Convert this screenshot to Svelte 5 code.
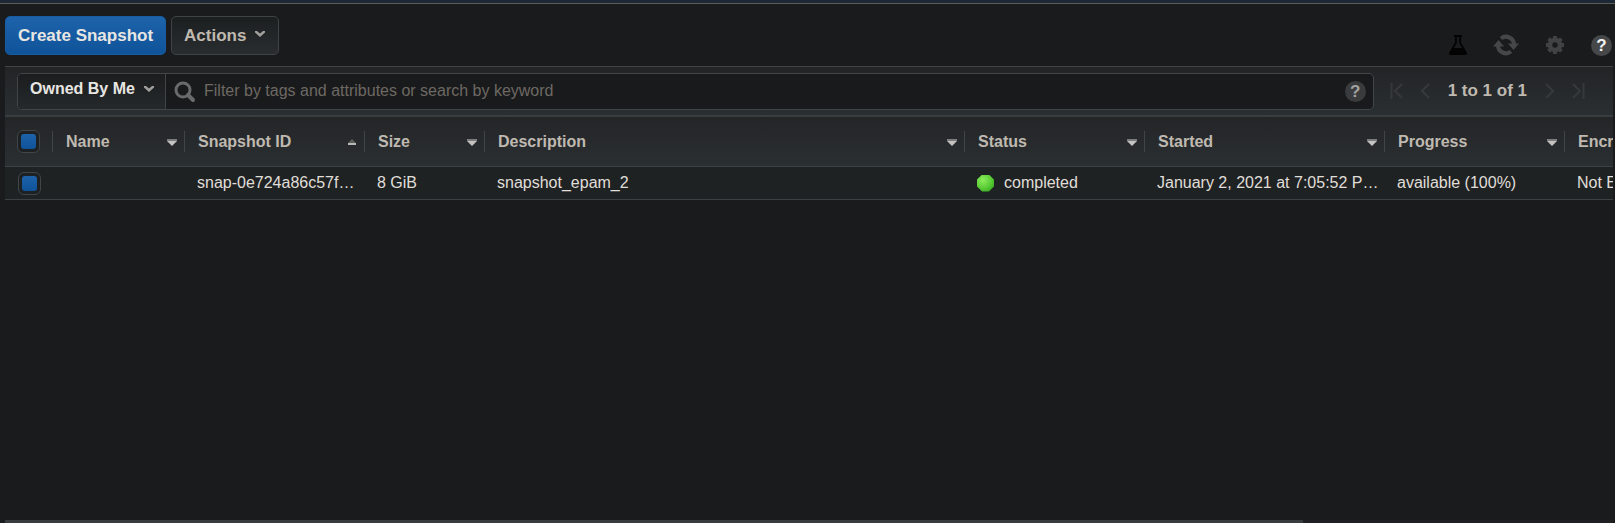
<script>
  const columns = [
    { label: 'Name', size: 'name', sort: 'down' },
    { label: 'Snapshot ID', size: 'medium', sort: 'up' },
    { label: 'Size', size: 'small', sort: 'down' },
    { label: 'Description', size: 'wide', sort: 'down' },
    { label: 'Status', size: 'medium', sort: 'down' },
    { label: 'Started', size: 'large', sort: 'down' },
    { label: 'Progress', size: 'medium', sort: 'down' },
    { label: 'Encryption', size: 'medium', sort: 'down' }
  ];
  const rows = [
    {
      name: '',
      id: 'snap-0e724a86c57f0b3d2',
      size: '8 GiB',
      description: 'snapshot_epam_2',
      status: 'completed',
      started: 'January 2, 2021 at 7:05:52 PM UTC+2',
      progress: 'available (100%)',
      encryption: 'Not Encrypted'
    }
  ];
</script>

{#snippet chevron()}
  <svg class="chevron" width="12" height="8" viewBox="0 0 12 8" aria-hidden="true">
    <path d="M1 1h2l3 2.600L9 1h2v1.400L6 7 1 2.400z" />
  </svg>
{/snippet}

<div class="page">
  <div class="strip"></div>

  <header class="toolbar">
    <div class="actions">
      <button class="btn primary">Create Snapshot</button>
      <button class="btn">Actions {@render chevron()}</button>
    </div>
    <div class="tools">
      <button class="icon" aria-label="Experiments">
        <svg width="18" height="20" viewBox="0 0 18 20">
          <path fill="#030303" fill-rule="evenodd" d="M5 0h8v2h-1v5.500l5.700 10c.7 1.300 0 2.500-1.400 2.500H1.700C.3 20-.4 18.800.3 17.500L6 7.500V2H5zM7.800 2v6l-3 5h8.400l-3-5V2z" />
        </svg>
      </button>
      <button class="icon" aria-label="Refresh">
        <svg width="26" height="22" viewBox="0 0 26 22">
          <g fill="none" stroke="#464748" stroke-width="4">
            <path d="M8 4.500A8 8 0 0 1 21 11" />
            <path d="M18 17.500A8 8 0 0 1 5 11" />
          </g>
          <path fill="#464748" d="M15 9.500h11L20.500 16zM0 12.500h11L5.500 6z" />
        </svg>
      </button>
      <button class="icon" aria-label="Settings">
        <svg width="20" height="20" viewBox="0 0 20 20">
          <g stroke="#414243" stroke-width="4">
            <path d="M10 1v18M1 10h18" stroke-dasharray="5 8 5" />
            <path d="M3.600 3.600l12.800 12.800M16.400 3.600L3.600 16.400" stroke-dasharray="5 8.100 5" />
          </g>
          <circle cx="10" cy="10" r="5" fill="none" stroke="#414243" stroke-width="4.500" />
        </svg>
      </button>
      <button class="help bright" aria-label="Help">?</button>
    </div>
  </header>

  <main class="panel">
    <div class="filterbar">
      <div class="search">
        <div class="owner">
          <select aria-label="Owner">
            <option>Owned By Me</option>
          </select>
          {@render chevron()}
        </div>
        <svg class="glass" width="22" height="22" viewBox="0 0 22 22" aria-hidden="true">
          <circle cx="9" cy="9" r="7" fill="none" stroke="#696a6b" stroke-width="3" />
          <path d="M14 14l5 5" stroke="#696a6b" stroke-width="4" stroke-linecap="round" />
        </svg>
        <input type="text" aria-label="Filter snapshots" placeholder="Filter by tags and attributes or search by keyword" />
        <button class="help" aria-label="Search help">?</button>
      </div>
      <nav class="pager" aria-label="Pages">
        <button class="icon" aria-label="First page">
          <svg width="13" height="16" viewBox="0 0 13 16"><path d="M1.500 0v16M12 1L5 8l7 7" /></svg>
        </button>
        <button class="icon" aria-label="Previous page">
          <svg width="9" height="16" viewBox="0 0 9 16"><path d="M8 1L1 8l7 7" /></svg>
        </button>
        <span>1 to 1 of 1</span>
        <button class="icon" aria-label="Next page">
          <svg width="9" height="16" viewBox="0 0 9 16"><path d="M1 1l7 7-7 7" /></svg>
        </button>
        <button class="icon" aria-label="Last page">
          <svg width="13" height="16" viewBox="0 0 13 16"><path d="M11.500 0v16M1 1l7 7-7 7" /></svg>
        </button>
      </nav>
    </div>

    <div class="scroller">
      <table>
        <colgroup>
          <col class="check" />
          {#each columns as column}
            <col class={column.size} />
          {/each}
        </colgroup>
        <thead>
          <tr>
            <th><input type="checkbox" aria-label="Select all" /></th>
            {#each columns as column}
              <th>
                <div class="heading">
                  <span>{column.label}</span>
                  {#if column.sort === 'up'}
                    <svg width="10" height="7" viewBox="0 0 10 7" aria-hidden="true">
                      <path fill="#5c5d5d" d="M5 0l4 4H1z" /><path fill="#b8b7b5" d="M1 4h8v2H1z" />
                    </svg>
                  {:else}
                    <svg width="10" height="7" viewBox="0 0 10 7" aria-hidden="true">
                      <path fill="#7c7c7c" d="M0 0h10v2H0z" /><path fill="#c4c3c1" d="M0 2h10L5 7z" />
                    </svg>
                  {/if}
                </div>
              </th>
            {/each}
          </tr>
        </thead>
        <tbody>
          {#each rows as row}
            <tr>
              <td><input type="checkbox" aria-label="Select {row.id}" /></td>
              <td>{row.name}</td>
              <td>{row.id}</td>
              <td>{row.size}</td>
              <td>{row.description}</td>
              <td>
                <div class="status"><i></i>{row.status}</div>
              </td>
              <td>{row.started}</td>
              <td>{row.progress}</td>
              <td>{row.encryption}</td>
            </tr>
          {/each}
        </tbody>
      </table>
    </div>
    <div class="track"><div class="thumb"></div></div>
  </main>
</div>

<style>
  :global(body) {
    background: #1a1b1d;
  }
  .page {
    box-sizing: border-box;
    min-height: 100vh;
    display: flex;
    flex-direction: column;
    font: 16px/20px 'Liberation Sans', Arial, sans-serif;
    color: #e0ded9;
  }
  .page *,
  .page *::before {
    box-sizing: border-box;
  }
  button,
  select,
  input {
    margin: 0;
    padding: 0;
    border: 0;
    background: none;
    font: inherit;
    color: inherit;
    appearance: none;
    outline: none;
  }
  svg {
    display: block;
    flex: none;
  }
  .strip {
    height: 4px;
    background: #1c2836;
    border-bottom: 1px solid #5b5d58;
  }
  .toolbar {
    display: flex;
    justify-content: space-between;
    padding: 12px 3px 10px 5px;
  }
  .actions {
    display: flex;
    gap: 5px;
  }
  .btn {
    display: flex;
    align-items: center;
    gap: 8px;
    height: 39px;
    padding: 0 12px;
    border: 1px solid #3e4344;
    border-radius: 5px;
    background: linear-gradient(#1c1f20, #292d2f);
    font-size: 17px;
    font-weight: bold;
    color: #bfb9b0;
  }
  .btn.primary {
    border-color: #175ca3;
    background: linear-gradient(#1d63ab, #0f5399);
    color: #e8e6e3;
  }
  .chevron {
    fill: #a09f9c;
  }
  .btn .chevron {
    margin-bottom: 4px;
  }
  .tools {
    display: flex;
    align-items: center;
    gap: 26px;
    padding-top: 18px;
  }
  .help {
    flex: none;
    width: 21px;
    height: 21px;
    border-radius: 50%;
    background: #3a3b3c;
    color: #a3a3a3;
    font-size: 17px;
    font-weight: bold;
    line-height: 21px;
    text-align: center;
  }
  .help.bright {
    background: #464748;
    color: #f2f2f2;
  }
  .panel {
    flex: 1;
    display: flex;
    flex-direction: column;
    min-width: 0;
    margin: 0 2px 0 5px;
    border-top: 1px solid #404445;
  }
  .filterbar {
    display: flex;
    align-items: center;
    gap: 16px;
    height: 48px;
    padding: 0 28px 0 12px;
    background: linear-gradient(#232426, #2a2f32);
  }
  .search {
    flex: 1;
    display: flex;
    align-items: center;
    height: 37px;
    padding-right: 7px;
    border: 1px solid #404546;
    border-radius: 5px;
    background: #191a1c;
    overflow: hidden;
  }
  .owner {
    display: grid;
    align-items: center;
    width: 148px;
    height: 100%;
    padding-bottom: 4px;
    border-right: 1px solid #404546;
    background: linear-gradient(#1b1d1e, #25292b);
  }
  .owner > :global(*) {
    grid-area: 1 / 1;
  }
  .owner select {
    width: 100%;
    padding-left: 12px;
    font-weight: bold;
    color: #e8e6e3;
  }
  .owner .chevron {
    justify-self: end;
    margin-right: 10px;
    pointer-events: none;
  }
  .glass {
    margin: 2px 8px 0;
  }
  .search input {
    flex: 1;
    min-width: 0;
  }
  .search input::placeholder {
    color: #6d6963;
    opacity: 1;
  }
  .pager {
    display: flex;
    align-items: center;
    gap: 18px;
    font-size: 17px;
    font-weight: bold;
    color: #bfb9b0;
  }
  .pager path {
    fill: none;
    stroke: #36393b;
    stroke-width: 2;
  }
  .scroller {
    flex: 1;
    overflow: hidden;
  }
  table {
    width: 0;
    table-layout: fixed;
    border-collapse: separate;
    border-spacing: 0;
  }
  .check {
    width: 47px;
  }
  .name {
    width: 132px;
  }
  .small {
    width: 120px;
  }
  .medium {
    width: 180px;
  }
  .large {
    width: 240px;
  }
  .wide {
    width: 480px;
  }
  th,
  td {
    padding: 0 3px 0 13px;
    border-bottom: 1px solid #3c4243;
    overflow: hidden;
    white-space: nowrap;
    text-overflow: ellipsis;
    text-align: left;
  }
  th {
    height: 52px;
    padding: 0;
    border-top: 2px solid #3a3e40;
    background: linear-gradient(#242527, #2a2f32);
    color: #bfb9b0;
  }
  td {
    height: 33px;
    background: #1e2223;
  }
  .heading {
    display: flex;
    align-items: center;
    justify-content: space-between;
    height: 21px;
    padding: 0 7px 0 13px;
    border-left: 1px solid #404546;
  }
  .heading svg {
    margin-top: 2px;
  }
  input[type='checkbox'] {
    display: grid;
    place-items: center;
    width: 23px;
    height: 23px;
    border: 1px solid #404546;
    border-radius: 6px;
    background: #1e2123;
  }
  th input[type='checkbox'] {
    margin-left: 12px;
  }
  input[type='checkbox']::before {
    content: '';
    width: 15px;
    height: 15px;
    border-radius: 3px;
    background: linear-gradient(#1d63ab, #0f5399);
  }
  .status {
    display: flex;
    align-items: center;
    gap: 10px;
  }
  .status i {
    width: 17px;
    height: 17px;
    clip-path: polygon(30% 0, 70% 0, 100% 30%, 100% 70%, 70% 100%, 30% 100%, 0 70%, 0 30%);
    background: radial-gradient(circle at 35% 30%, #8cec5c, #55c832 55%, #1f9412);
  }
  .track {
    height: 3px;
    background: #201f21;
  }
  .thumb {
    width: 80.7%;
    height: 100%;
    background: #393c3e;
  }
</style>
